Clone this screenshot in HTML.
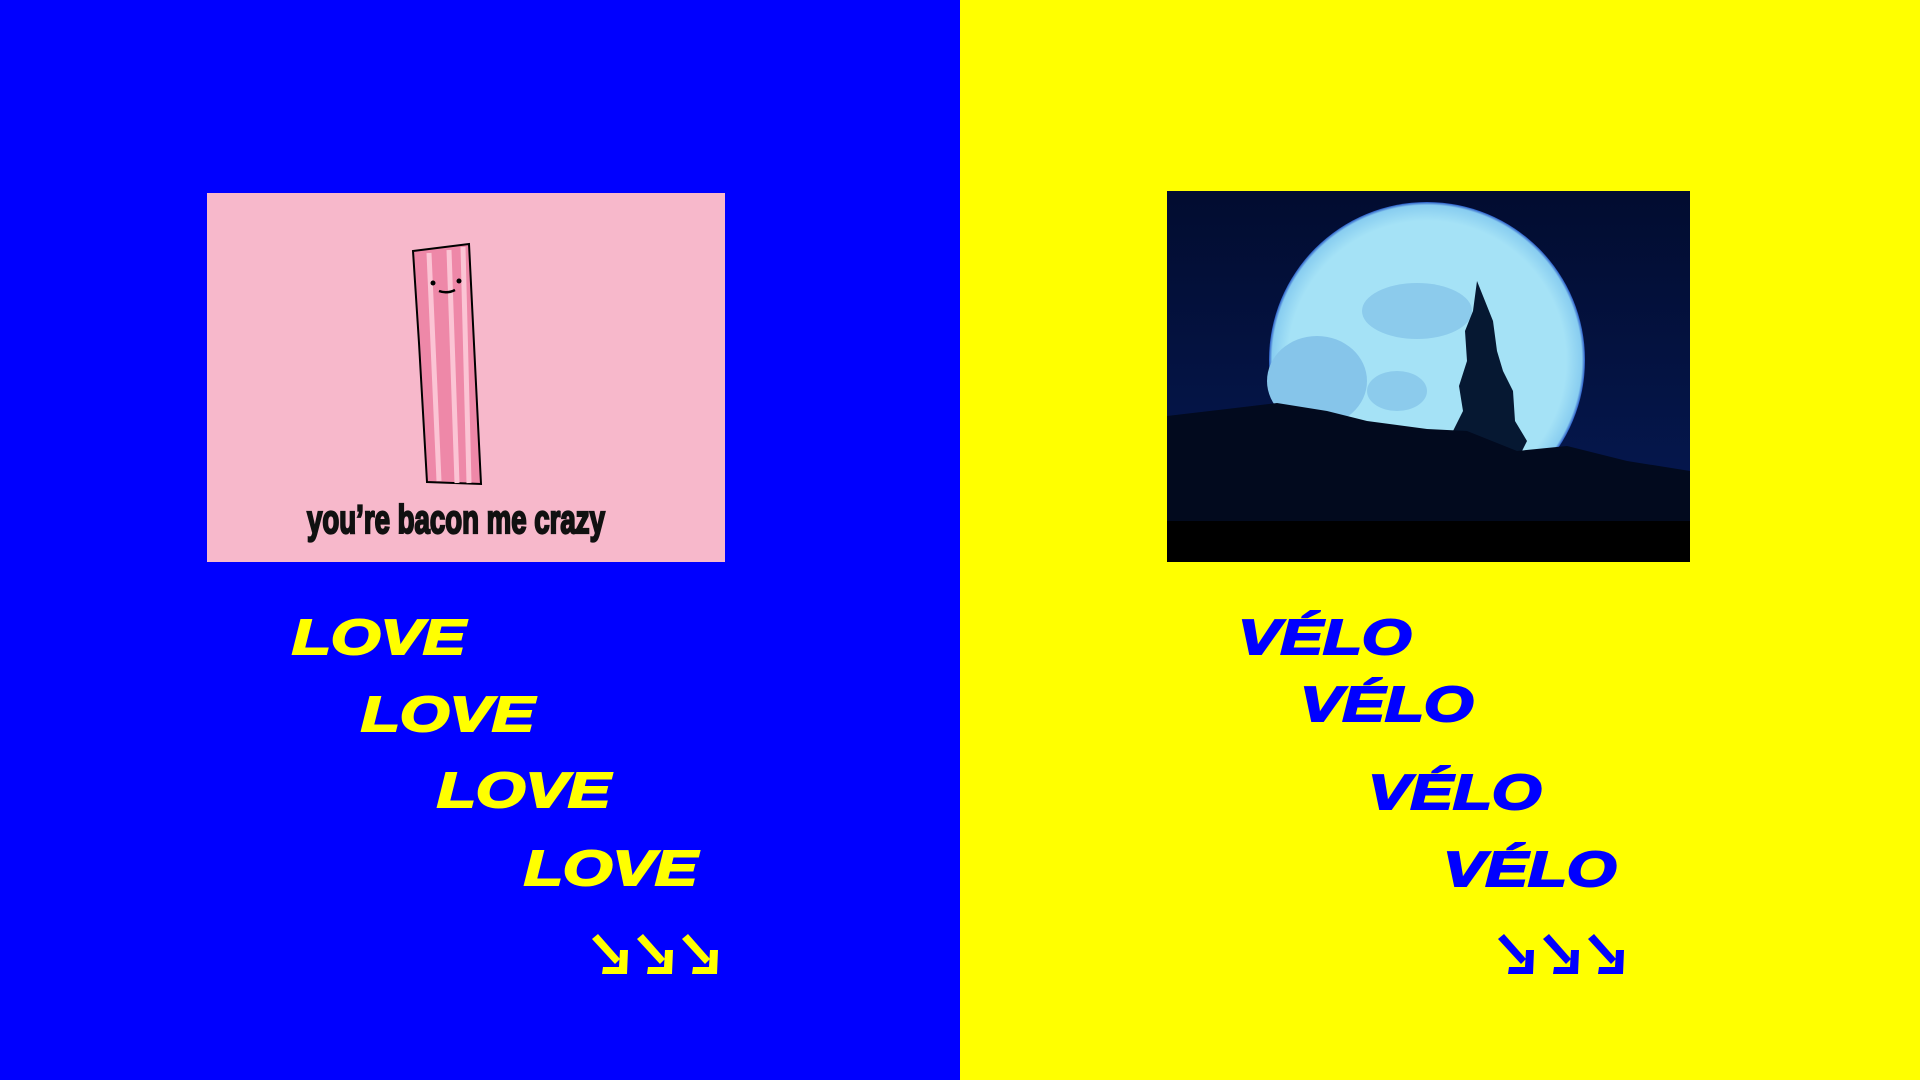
<!DOCTYPE html>
<html><head><meta charset="utf-8"><style>
html,body{margin:0;padding:0}
body{width:1920px;height:1080px;position:relative;overflow:hidden;background:#0000ff}
#right{position:absolute;left:960px;top:0;width:960px;height:1080px;background:#ffff00}
.w{position:absolute;font-family:"Liberation Sans",sans-serif;font-weight:bold;font-style:italic;font-size:49px;line-height:1;transform:scaleX(1.3);transform-origin:0 0;white-space:nowrap;-webkit-text-stroke:2px currentColor}
.y{color:#ffff00}.b{color:#0000ff}
svg{position:absolute}
</style></head><body>
<div id="right"></div>

<svg style="left:207px;top:193px" width="518" height="369" viewBox="0 0 518 369">
<rect width="518" height="369" fill="#f7b8cb"/>
<polygon points="206,58 262,51 274,291 220,289 212,150" fill="#ee88a8" stroke="#000" stroke-width="2"/>
<path d="M222,60 L232,288 M242,57 L250,290 M256,54 L262,290" stroke="#fbc4d4" stroke-width="5" fill="none"/>
<circle cx="226" cy="90" r="2.5" fill="#000"/><circle cx="252" cy="88" r="2.5" fill="#000"/>
<path d="M232,98 Q240,101 248,97" stroke="#000" stroke-width="2.5" fill="none"/>
<text x="100" y="340" font-family="'Liberation Sans Narrow','Liberation Sans',sans-serif" font-weight="bold" font-size="40" textLength="298" lengthAdjust="spacingAndGlyphs" fill="#111" stroke="#111" stroke-width="2.2">you’re bacon me crazy</text>
</svg>

<svg style="left:1167px;top:191px" width="523" height="371" viewBox="0 0 523 371">
<defs><radialGradient id="g" cx="0.5" cy="0.5" r="0.5"><stop offset="0.88" stop-color="#a5e2f6"/><stop offset="0.98" stop-color="#88cdf0"/><stop offset="1" stop-color="#2a5cc8"/></radialGradient>
<linearGradient id="sky" x1="0" y1="0" x2="0" y2="1"><stop offset="0" stop-color="#020c30"/><stop offset="1" stop-color="#061a55"/></linearGradient></defs>
<rect width="523" height="371" fill="url(#sky)"/>
<circle cx="260" cy="169" r="158" fill="url(#g)"/>
<ellipse cx="150" cy="190" rx="50" ry="45" fill="#86c5ea"/>
<ellipse cx="250" cy="120" rx="55" ry="28" fill="#8ccbec"/>
<ellipse cx="230" cy="200" rx="30" ry="20" fill="#8ccbec"/>
<polygon points="310,90 318,110 326,130 330,160 336,180 346,200 348,230 360,250 350,270 290,270 270,260 286,240 296,220 292,195 300,170 298,140 306,120" fill="#061832"/>
<path d="M0,225 L60,218 L110,212 L160,220 L200,230 L260,238 L300,240 L350,260 L400,255 L460,270 L523,280 L523,371 L0,371 Z" fill="#020a1e"/>
<rect y="330" width="523" height="41" fill="#000"/>
</svg>

<div class="w y" style="left:292px;top:614px">LOVE</div>
<div class="w y" style="left:361px;top:691px">LOVE</div>
<div class="w y" style="left:437px;top:767px">LOVE</div>
<div class="w y" style="left:524px;top:845px">LOVE</div>

<div class="w b" style="left:1238px;top:614px">VÉLO</div>
<div class="w b" style="left:1300px;top:681px">VÉLO</div>
<div class="w b" style="left:1368px;top:769px">VÉLO</div>
<div class="w b" style="left:1443px;top:846px">VÉLO</div>

<svg style="left:592px;top:931px" width="135" height="46" viewBox="0 0 135 46">
<g id="a" fill="#ffff00"><polygon points="0,8 6,3 28,28 23,33"/><polygon points="11,36 27,36 28,19 36,19 35,43 10,43"/></g>
<use href="#a" x="45"/><use href="#a" x="90"/>
</svg>
<svg style="left:1498px;top:931px" width="135" height="46" viewBox="0 0 135 46">
<g id="c" fill="#0000ff"><polygon points="0,8 6,3 28,28 23,33"/><polygon points="11,36 27,36 28,19 36,19 35,43 10,43"/></g>
<use href="#c" x="45"/><use href="#c" x="90"/>
</svg>
</body></html>
